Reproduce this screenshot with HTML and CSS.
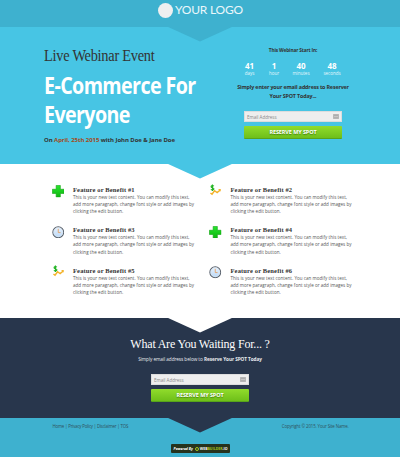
FILE: index.html
```html
<!DOCTYPE html>
<html lang="en">
<head>
<meta charset="utf-8">
<title>Live Webinar Event</title>
<link rel="stylesheet" href="styles.css">
</head>
<body>
<svg class="symbols" aria-hidden="true">
  <defs>
    <linearGradient id="green" x2="0" y2="1"><stop stop-color="#26e62d"/><stop offset="1" stop-color="#10b510"/></linearGradient>
    <linearGradient id="glass" x2="0" y2="1"><stop stop-color="#eaf3fd"/><stop offset="1" stop-color="#b9d8f8"/></linearGradient>
    <symbol id="plus" viewBox="0 0 12 12"><path d="M4 .4h4v3.700h3.600v4H8v3.500H4V8.100H.4v-4H4z" fill="url(#green)" stroke="#12a314" stroke-width=".6"/></symbol>
    <symbol id="clock" viewBox="0 0 12 12"><circle cx="6" cy="6" r="5.2" fill="url(#glass)" stroke="#59616c" stroke-width="1"/><circle cx="6" cy="6" r="4.3" fill="none" stroke="#dce5ee" stroke-width=".6"/><path d="M6 2.700V6.300h2.200" fill="none" stroke="#e39c5e" stroke-width=".8"/></symbol>
    <symbol id="money" viewBox="0 0 12 12"><path d="M1.400 8.600l1.500 1.200 2.400-3.300 2.500 1.700 3-2.400" fill="none" stroke="#f3b32b" stroke-width="1.400"/><path d="M8.800 4.700l2.600.2-.6 2.600z" fill="#f3b32b"/><path d="M4.700 2.100C3.800 1.300 2 1.400 2 2.600s2.700.7 2.700 2S2.600 6 1.800 5.100M3.300 .4v6.300" fill="none" stroke="#25b526" stroke-width="1.100"/></symbol>
    <symbol id="mail" viewBox="0 0 6 5"><rect x=".3" y=".3" width="5.400" height="4.400" rx=".6" fill="#c9c9c9" stroke="#999" stroke-width=".6"/><path d="M1 1.500h4M1 3.400h4" stroke="#9b9b9b" stroke-width=".6"/></symbol>
  </defs>
</svg>
<header class="top chevron">
  <span class="logo-dot"></span><span class="logo-text">YOUR LOGO</span>
</header>
<section class="hero chevron">
  <div class="pitch">
    <p class="kicker">Live Webinar Event</p>
    <h1>E-Commerce For<br>Everyone</h1>
    <p class="date">On <em>April, 25th 2015</em> with John Doe &amp; Jane Doe</p>
  </div>
  <div class="signup">
    <p class="start">This Webinar Start In:</p>
    <ul class="timer">
      <li><b>41</b><span>days</span></li><li><b>1</b><span>hour</span></li><li><b>40</b><span>minutes</span></li><li><b>48</b><span>seconds</span></li>
    </ul>
    <p class="enter">Simply enter your email address to Reserver<br>Your SPOT Today...</p>
    <form class="form"><div class="field">Email Address<svg><use href="#mail"/></svg></div><button type="button">RESERVE MY SPOT</button></form>
  </div>
</section>
<main class="features chevron">
  <article><svg><use href="#plus"/></svg><div><h3>Feature or Benefit #1</h3><p>This is your new text content. You can modify this text,<br>add more paragraph, change font style or add images by<br>clicking the edit button.</p></div></article>
  <article><svg class="raised"><use href="#money"/></svg><div><h3>Feature or Benefit #2</h3><p>This is your new text content. You can modify this text,<br>add more paragraph, change font style or add images by<br>clicking the edit button.</p></div></article>
  <article><svg><use href="#clock"/></svg><div><h3>Feature or Benefit #3</h3><p>This is your new text content. You can modify this text,<br>add more paragraph, change font style or add images by<br>clicking the edit button.</p></div></article>
  <article><svg><use href="#plus"/></svg><div><h3>Feature or Benefit #4</h3><p>This is your new text content. You can modify this text,<br>add more paragraph, change font style or add images by<br>clicking the edit button.</p></div></article>
  <article><svg class="raised"><use href="#money"/></svg><div><h3>Feature or Benefit #5</h3><p>This is your new text content. You can modify this text,<br>add more paragraph, change font style or add images by<br>clicking the edit button.</p></div></article>
  <article><svg><use href="#clock"/></svg><div><h3>Feature or Benefit #6</h3><p>This is your new text content. You can modify this text,<br>add more paragraph, change font style or add images by<br>clicking the edit button.</p></div></article>
</main>
<section class="closing chevron">
  <h2>What Are You Waiting For... ?</h2>
  <p>Simply email address below to <b>Reserve Your SPOT Today</b></p>
  <form class="form"><div class="field">Email Address<svg><use href="#mail"/></svg></div><button type="button">RESERVE MY SPOT</button></form>
</section>
<footer>
  <div class="legal"><span class="links">Home | Privacy Policy | Disclaimer | TOS</span><span class="copy">Copyright © 2015. Your Site Name.</span></div>
  <div class="powered"><i>Powered By</i><span class="mark"></span><b>WEB<em>BUILDER</em>.IO</b></div>
</footer>
</body>
</html>
```

FILE: styles.css
```css
* { box-sizing: border-box; margin: 0; padding: 0; }
body { width: 400px; height: 457px; overflow: hidden; background: #fff; color: #333; font-family: "Open Sans", sans-serif; white-space: nowrap; }
.symbols { position: absolute; width: 0; height: 0; }
.chevron { position: relative; }
.chevron::after { content: ""; position: absolute; top: 100%; left: 167px; width: 66px; height: 15px; margin-top: -.5px; background: inherit; clip-path: polygon(0 0, 100% 0, 50% 100%); z-index: 1; }
.top { height: 27px; background: #3eb1cf; display: flex; padding: 3px 0 0 157.5px; }
.logo-dot { width: 15px; height: 15px; border-radius: 50%; background: #eeeff0; margin-right: 2.5px; }
.logo-text { font: 12px/14px Lato, sans-serif; letter-spacing: -.2px; color: #eaf7fb; }
.hero { height: 137px; background: #47c5e4; display: flex; padding-left: 44px; }
.pitch { width: 190px; padding-top: 18px; }
.kicker { font: 16px/22px "Liberation Serif", serif; letter-spacing: -.3px; transform: scaleX(.9); transform-origin: left; }
h1 { font: bold 22.5px/28.5px "Open Sans", sans-serif; letter-spacing: -.7px; color: #fff; margin-top: 5px; transform: scaleX(.875); transform-origin: left; }
.date { font-size: 6px; line-height: 8px; font-weight: bold; margin-top: 7px; letter-spacing: -.07px; }
em { font-style: normal; }
.date em { color: #a34a20; }
.signup { width: 118px; text-align: center; display: flex; flex-direction: column; align-items: center; }
.start { font-size: 4.8px; line-height: 8px; font-weight: bold; letter-spacing: -.15px; margin-top: 19px; }
.timer { list-style: none; display: grid; grid-template-columns: 24px 25px 29px 33px; margin-top: 7.5px; color: #e4f7fc; }
.timer b { display: block; font-size: 8px; line-height: 8px; color: #fff; }
.timer span { display: block; font-size: 4.5px; line-height: 6px; }
.enter { font-size: 5.4px; line-height: 8.5px; font-weight: bold; letter-spacing: -.17px; margin-top: 7.5px; }
.form { width: 98px; }
.signup .form { margin-top: 11px; }
.field { height: 11px; background: #eee; border: .5px solid #ddd; color: #888; font-size: 4.5px; line-height: 10px; padding: 0 2px; display: flex; align-items: center; justify-content: space-between; text-align: left; }
.field svg { width: 6px; height: 5px; }
button { display: block; width: 98px; height: 13px; margin-top: 4px; border: 0; border-bottom: 1px solid #58a51a; border-radius: 1px; background: linear-gradient(#91dc2c, #6ebf19); color: #fff; font: bold 5.5px/12px "Open Sans", sans-serif; letter-spacing: -.1px; text-shadow: 0 .5px 1px #467f10; }
.features { height: 154px; background: #fff; display: grid; grid-template-columns: 157.5px 160px; grid-auto-rows: 40.7px; padding: 20.5px 0 0 51.5px; }
article { display: flex; }
article svg { width: 12.5px; height: 12.5px; margin: .5px 9px 0 0; }
article .raised { margin-top: -.5px; }
h3 { font: bold 6.5px/9px "Liberation Serif", serif; letter-spacing: .14px; color: #333; }
article p { font-size: 4.5px; line-height: 7.3px; letter-spacing: .045px; color: #555; }
.closing { height: 100px; background: #28364c; color: #fff; text-align: center; padding-top: 18.5px; }
h2 { font: 12px/14px "Liberation Serif", serif; letter-spacing: -.2px; }
.closing p { font-size: 4.7px; line-height: 7px; letter-spacing: -.06px; margin-top: 5.5px; color: #e8ebef; }
.closing .form { margin: 11px auto 0 151px; }
footer { height: 39px; background: #3eb1cf; }
.legal { display: flex; justify-content: space-between; padding: 4px 51.5px 0 52.5px; font-size: 4.4px; line-height: 8px; color: #31515d; }
.links { letter-spacing: -.2px; }
.copy { letter-spacing: -.13px; }
.powered { width: 59px; height: 9px; margin: 14px 0 0 171px; background: #26321d; border-radius: 1px; color: #fff; display: flex; align-items: center; justify-content: center; font-size: 3.5px; line-height: 8px; gap: 1px; }
.powered i { font-weight: bold; margin-right: 1px; }
.powered em { color: #a5c71e; }
.mark { width: 4px; height: 4px; border: 1px solid #a5c71e; border-radius: 2px; }
```
